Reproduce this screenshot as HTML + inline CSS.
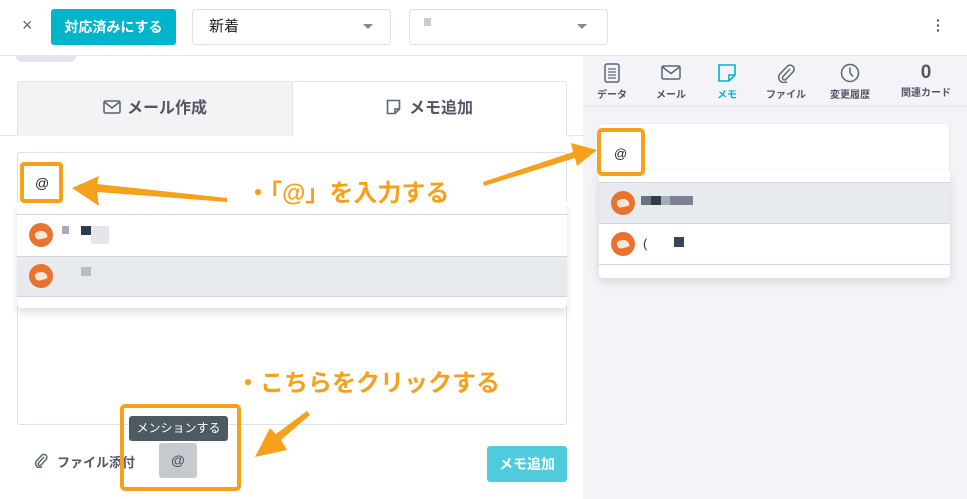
<!DOCTYPE html>
<html><head><meta charset="utf-8"><style>
*{box-sizing:border-box;margin:0;padding:0}
body{width:967px;height:499px;overflow:hidden;position:relative;background:#fff;font-family:"Liberation Sans","Noto Sans CJK JP",sans-serif;color:#333}
.a{position:absolute}
.av{position:absolute;width:24px;height:24px;border-radius:50%;background:#e8722e}
.av::after{content:"";position:absolute;left:6px;top:8px;width:12px;height:8px;background:#f6e6d6;border-radius:3px 6px 2px 4px;transform:rotate(-15deg)}
.org{color:#f5a11c;font-weight:bold;font-size:24px;white-space:nowrap}
</style></head><body>
<div class="a" style="left:583px;top:56px;width:384px;height:443px;background:#f4f4f8"></div>
<div class="a" style="left:0;top:0;width:967px;height:56px;background:#fff;border-bottom:1px solid #e6e6ee"></div>
<div class="a" style="left:22px;top:15px;font-size:18px;color:#666">×</div>
<div class="a" style="left:51px;top:9px;width:125px;height:36px;background:#00b4cc;border-radius:3px;color:#fff;font-size:14px;font-weight:bold;text-align:center;line-height:36px">対応済みにする</div>
<div class="a" style="left:192px;top:9px;width:199px;height:36px;border:1px solid #dde;border-radius:4px;font-size:15px;line-height:34px;padding-left:16px;color:#222">新着</div>
<div class="a" style="left:363px;top:24px;border:5px solid transparent;border-top-color:#888"></div>
<div class="a" style="left:409px;top:9px;width:199px;height:36px;border:1px solid #dde;border-radius:4px"></div>
<div class="a" style="top:18px;width:7px;height:8px;background:#ccc;left:424px"></div>
<div class="a" style="left:577px;top:24px;border:5px solid transparent;border-top-color:#888"></div>
<div class="a" style="left:936px;top:18px;font-size:14px;color:#444;font-weight:bold;line-height:5px">·<br>·<br>·</div>
<div class="a" style="left:16px;top:56px;width:60px;height:6px;background:#e4e4ee;border-radius:0 0 30px 30px"></div>
<div class="a" style="left:0;top:135px;width:583px;height:1px;background:#e6e6ee"></div>
<div class="a" style="left:17px;top:81px;width:276px;height:55px;background:#f3f3f5;border:1px solid #e4e4ec;border-bottom:none;border-radius:3px 3px 0 0;font-size:16px;font-weight:bold;color:#556;text-align:center;line-height:54px">
<svg width="18" height="14" style="vertical-align:-1px;margin-right:6px" viewBox="0 0 18 14"><rect x="1" y="1" width="16" height="12" rx="1.5" fill="none" stroke="#5a6670" stroke-width="1.6"/><path d="M1.5 2 L9 8 L16.5 2" fill="none" stroke="#5a6670" stroke-width="1.6"/></svg>メール作成</div>
<div class="a" style="left:292px;top:81px;width:275px;height:56px;background:#fff;border:1px solid #e4e4ec;border-bottom:none;border-radius:3px 3px 0 0;font-size:16px;font-weight:bold;color:#556;text-align:center;line-height:54px">
<svg width="15" height="16" style="vertical-align:-2px;margin-right:8px" viewBox="0 0 15 16"><path d="M1.5 1.5 H13.5 V10 L9 14.5 H1.5 Z M13.5 10 H9 V14.5" fill="none" stroke="#5a6670" stroke-width="1.6"/></svg>メモ追加</div>
<div class="a" style="left:17px;top:152px;width:550px;height:273px;border:1px solid #e0e0ea;border-radius:3px"></div>
<div class="a" style="left:35px;top:175px;font-size:14px;color:#222">@</div>
<div class="a" style="left:17px;top:202px;width:550px;height:106px;background:#fff;box-shadow:0 5px 8px rgba(0,0,0,.12);border-radius:0 0 4px 4px">
<div class="a" style="left:0;top:12px;width:550px;height:1px;background:#d4d4dc"></div>
<div class="a" style="left:0;top:54px;width:550px;height:41px;background:#e8ebee;border-top:1px solid #d4d4dc;border-bottom:1px solid #d4d4dc"></div>
<div class="av" style="left:12px;top:21px"></div>
<div class="a" style="left:45px;top:24px;width:7px;height:8px;background:#aab"></div>
<div class="a" style="left:64px;top:24px;width:10px;height:9px;background:#2d3a4a"></div>
<div class="a" style="left:74px;top:24px;width:18px;height:18px;background:#e6e6ea"></div>
<div class="av" style="left:12px;top:62px"></div>
<div class="a" style="left:64px;top:65px;width:10px;height:9px;background:#b8bcc4"></div>
</div>
<svg class="a" style="left:34px;top:452px" width="14" height="16" viewBox="0 0 14 16"><path d="M10 5 L4.5 11 a1.6 1.6 0 0 0 2.3 2.2 L12 7.5 a3 3 0 0 0 -4.3 -4.2 L2.3 9.2 a4 4 0 0 0 5.7 5.5" fill="none" stroke="#5a6670" stroke-width="1.5"/></svg>
<div class="a" style="left:57px;top:452px;font-size:13px;font-weight:bold;color:#556">ファイル添付</div>
<div class="a" style="left:159px;top:443px;width:38px;height:35px;background:#c4cace;border-radius:3px;text-align:center;line-height:35px;font-size:14px;font-weight:bold;color:#556">@</div>
<div class="a" style="left:129px;top:416px;width:99px;height:25px;background:#4d5a62;border-radius:3px;color:#fff;font-size:12px;text-align:center;line-height:25px">メンションする</div>
<div class="a" style="left:487px;top:446px;width:80px;height:36px;background:#4fcbdc;border-radius:3px;color:#fff;font-size:14px;font-weight:bold;text-align:center;line-height:36px">メモ追加</div>
<div class="a" style="left:583px;top:106px;width:384px;height:1px;background:#e4e4ec"></div>
<div class="a" style="left:585px;top:63px;width:382px;font-size:10px;font-weight:bold;color:#556;">
<div class="a" style="left:2px;width:50px;text-align:center"><svg width="16" height="20" viewBox="0 0 16 20"><rect x="1" y="1" width="14" height="18" rx="2" fill="none" stroke="#5a6670" stroke-width="1.5"/><path d="M4 6H12M4 9H12M4 12H12M4 15H12" stroke="#5a6670" stroke-width="1.2"/></svg><br>データ</div>
<div class="a" style="left:61px;width:50px;text-align:center"><svg width="20" height="20" viewBox="0 0 20 20"><rect x="1" y="3" width="18" height="13" rx="1.5" fill="none" stroke="#5a6670" stroke-width="1.5"/><path d="M1.5 4 L10 10.5 L18.5 4" fill="none" stroke="#5a6670" stroke-width="1.5"/></svg><br>メール</div>
<div class="a" style="left:117px;width:50px;text-align:center;color:#00b4cc"><svg width="20" height="20" viewBox="0 0 20 20"><path d="M2 2 H18 V12 L12 18 H2 Z M18 12 H12 V18" fill="none" stroke="#00b4cc" stroke-width="1.6"/></svg><br>メモ</div>
<div class="a" style="left:176px;width:50px;text-align:center"><svg width="20" height="20" viewBox="0 0 20 20"><path d="M14 6 L7 13.5 a2 2 0 0 0 3 2.8 L17 9 a4 4 0 0 0 -5.8 -5.6 L3.5 11.5 a5.2 5.2 0 0 0 7.5 7" fill="none" stroke="#5a6670" stroke-width="1.5"/></svg><br>ファイル</div>
<div class="a" style="left:240px;width:50px;text-align:center"><svg width="20" height="20" viewBox="0 0 20 20"><circle cx="10" cy="10" r="8.5" fill="none" stroke="#5a6670" stroke-width="1.5"/><path d="M10 4.5 V10 L13 13.5" fill="none" stroke="#5a6670" stroke-width="1.5"/></svg><br>変更履歴</div>
<div class="a" style="left:311px;width:60px;text-align:center"><div style="font-size:19px;line-height:19px;margin-bottom:2px">0</div>関連カード</div>
</div>
<div class="a" style="left:599px;top:123px;width:351px;height:60px;background:#fff;border-radius:4px;border:1px solid #ececf3"></div>
<div class="a" style="left:614px;top:146px;font-size:13px;color:#222">@</div>
<div class="a" style="left:599px;top:172px;width:351px;height:106px;background:#fff;border-radius:0 0 4px 4px;box-shadow:0 4px 10px rgba(0,0,0,.12)">
<div class="a" style="left:0;top:10px;width:351px;height:42px;background:#e8ebee;border-top:1px solid #d4d4dc;border-bottom:1px solid #d4d4dc"></div>
<div class="a" style="left:0;top:92px;width:351px;height:1px;background:#d4d4dc"></div>
<div class="av" style="left:12px;top:19px"></div>
<div class="a" style="left:42px;top:24px;width:52px;height:9px;background:linear-gradient(90deg,#6a7280 0 10px,#2f3c4c 10px 20px,#a8acb4 20px 29px,#7c8290 29px 52px)"></div>
<div class="av" style="left:12px;top:60px"></div>
<div class="a" style="left:44px;top:64px;font-size:13px;color:#333">(</div>
<div class="a" style="left:75px;top:65px;width:10px;height:10px;background:#3a4454"></div>
</div>
<div class="a" style="left:20px;top:162px;width:43px;height:41px;border:4px solid #f5a11c;border-radius:4px"></div>
<div class="a" style="left:597px;top:128px;width:48px;height:48px;border:4px solid #f5a11c;border-radius:5px"></div>
<div class="a" style="left:120px;top:404px;width:121px;height:87px;border:4px solid #f5a11c;border-radius:5px"></div>
<div class="a org" style="left:246px;top:173px">・「@」を入力する</div>
<div class="a org" style="left:236px;top:363px">・こちらをクリックする</div>
<svg class="a" style="left:0;top:0" width="967" height="499">
<g fill="#f5a11c">
<polygon points="72,188 99,176 97,184 227,198 227,202 97,192 99,206"/>
<polygon points="597,150 571,143 573,152 483,182 484,186 575,158 577,166"/>
<polygon points="255,457 270,428 276,434 307,411 310,415 281,440 287,450"/>
</g></svg>
</body></html>
